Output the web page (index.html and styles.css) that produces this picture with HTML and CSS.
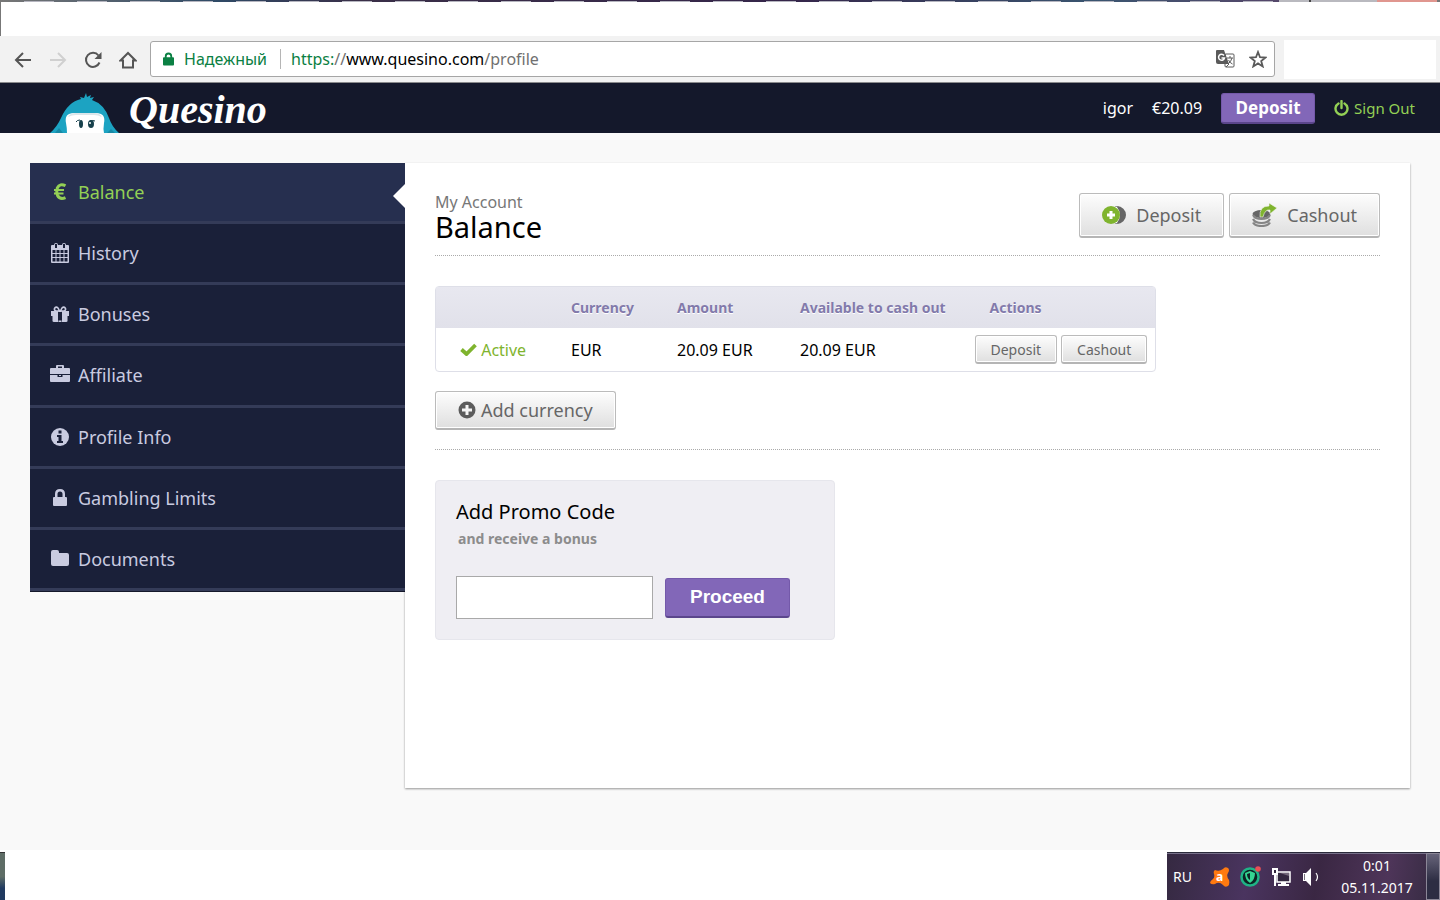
FILE: index.html
```
<!DOCTYPE html>
<html lang="en">

<head>
    <meta charset="utf-8">
    <title>Quesino - Balance</title>
    <link rel="stylesheet" href="styles.css">
</head>

<body>
    <div class="titlebar"></div>
    <div class="toolbar">
        <div class="nav-buttons">
            <button aria-label="Back"><svg width="18" height="18" viewBox="0 0 18 18"><path d="M17 9H2M9 2L2 9l7 7"/></svg></button>
            <button class="off" aria-label="Forward"><svg width="18" height="18" viewBox="0 0 18 18"><path d="M1 9h15M9 2l7 7-7 7"/></svg></button>
            <button aria-label="Reload"><svg width="18" height="18" viewBox="0 0 18 18"><path d="M15.5 11.500A7 7 0 1 1 14.500 4.500"/><path class="solid" d="M17.500 1v7h-7z"/></svg></button>
            <button aria-label="Home"><svg width="18" height="18" viewBox="0 0 18 18"><path d="M1.500 9.500L9 2l7.500 7.500H14v7H4v-7z"/></svg></button>
        </div>
        <div class="address">
            <svg width="11" height="14" viewBox="0 0 12 14"><path fill="#0b8043" d="M1 5h1V4a4 4 0 0 1 8 0v1h1q1 0 1 1v7q0 1-1 1H1q-1 0-1-1V6q0-1 1-1zm3 0h4V4a2 2 0 0 0-4 0z"/></svg>
            <span class="secure">Надежный</span>
            <div class="url"><span class="scheme">https:</span>//<span class="host">www.quesino.com</span>/profile</div>
            <button aria-label="Translate"><svg width="19" height="18" viewBox="0 0 19 18"><rect x="9" y="4" width="9" height="13" rx="1" fill="#fff" stroke="#5a5a5a"/><path fill="#5a5a5a" d="M1 0h7l5 14H2q-2 0-2-2V1q0-1 1-1z"/><path d="M8 5.500A3 3 0 1 0 8.500 8H5.500" fill="none" stroke="#fff" stroke-width="1.500"/><path d="M11 8h6M14 6v2M16 8q-1 4-4 6M12.500 10q1.500 3 4 4M10 17l3-3" fill="none" stroke="#5a5a5a"/></svg></button>
            <button aria-label="Bookmark"><svg width="18" height="18" viewBox="0 0 18 18"><path d="M9 2l2 5.200 5.500.3-4.300 3.500L13.700 16.400 9 13.400l-4.700 3L5.800 11 1.500 7.500 7 7.200z" fill="none" stroke="#5a5a5a" stroke-width="1.800"/></svg></button>
        </div>
        <div class="extensions"></div>
    </div>

    <header class="header">
        <a class="logo" href="#">
            <svg width="70" height="40" viewBox="0 0 70 40">
                <path fill="#1ca3c2" d="M0 40q7-6 11-15Q18 9 31 6l-1-2 4 1 2-5 1 4 4-2-1 3 4-1-2 3q12 4 17 18 3 9 10 15z"/>
                <path fill="#1789a5" d="M5 40l4-5 4 5zM57 40l4-4 4 4z"/>
                <path fill="#fff" d="M16 30q-2-10 8-10h22q10 0 8 10-1 6 0 10H17q0-5-1-10z"/>
                <path fill="#dbe6ea" d="M18 24q2-4 8-4h18q6 0 8 4-4-2-8-2H26q-4 0-8 2z"/>
                <ellipse cx="31" cy="31" rx="2" ry="4" fill="#17404c"/>
                <ellipse cx="41" cy="31" rx="3" ry="4" fill="#17404c"/>
                <path fill="none" stroke="#17404c" d="M26 29q1-2 4-2M45 28q-2-1-5 0"/>
                <circle cx="40" cy="30" r="1" fill="#fff"/>
            </svg>
            <span>Quesino</span>
        </a>
        <div class="user">
            <span>igor</span>
            <span class="sum">€20.09</span>
            <button class="purple top-deposit">Deposit</button>
            <a class="signout" href="#"><svg width="15" height="16" viewBox="0 0 15 16"><path d="M4.500 3.500a6 6 0 1 0 6 0M7.500 1v7" fill="none" stroke="#93d055" stroke-width="2.400" stroke-linecap="round"/></svg>Sign Out</a>
        </div>
    </header>

    <main class="page">
        <nav class="menu">
            <a class="active" href="#"><svg viewBox="0 0 20 20"><path d="M15.500 3.800Q10 .8 7.300 6q-1.200 4 .2 7.500Q10 18 15.500 15.600" fill="none" stroke="currentColor" stroke-width="3"/><path d="M4 8h10M4 11.500h9.500" stroke="currentColor" stroke-width="2"/></svg>Balance</a>
            <a href="#"><svg viewBox="0 0 20 20"><path fill="currentColor" fill-rule="evenodd" d="M2 2h2q0-2 2-2t2 2h4q0-2 2-2t2 2h2q1 0 1 1v16q0 1-1 1H2q-1 0-1-1V3q0-1 1-1zm3-1v4h2V1zm8 0v4h2V1zM2.500 7v3h3V7zm4 0v3h3V7zm4 0v3h3V7zm4 0v3h3V7zm-12 4v3h3v-3zm4 0v3h3v-3zm4 0v3h3v-3zm4 0v3h3v-3zm-12 4v3.500h3V15zm4 0v3.500h3V15zm4 0v3.500h3V15zm4 0v3.500h3V15z"/></svg>History</a>
            <a href="#"><svg viewBox="0 0 20 20"><path fill="currentColor" d="M1 7h7v5H1zM12 7h7v5h-7zM2.500 11H8v7H4q-1.500 0-1.500-1zM12 11h5.500v6q0 1-1.500 1h-4zM8.500 7h3v1h-3zM8.500 16.500h3V18h-3z"/><path d="M9.500 7H6Q4 6.500 4.500 4.500 6 2 8 4zM10.500 7H14q2-.500 1.500-2.500Q14 2 12 4z" fill="none" stroke="currentColor" stroke-width="1.600"/></svg>Bonuses</a>
            <a href="#"><svg viewBox="0 0 20 20"><path fill="currentColor" fill-rule="evenodd" d="M6 3V1q0-1 1-1h6q1 0 1 1v2h5q1 0 1 1v5H0V4q0-1 1-1zm2 0h4V1.500H8zM0 10h7.500v2h5v-2H20v6q0 1-1 1H1q-1 0-1-1zm9 0h2v1H9z"/></svg>Affiliate</a>
            <a href="#"><svg viewBox="0 0 20 20"><circle cx="10" cy="10" r="9" fill="currentColor"/><path fill="#1a2039" d="M8.500 3.500h3v3h-3zM7 8h4.500v6H13v2H7v-2h1.500v-4H7z"/></svg>Profile Info</a>
            <a href="#"><svg viewBox="0 0 20 20"><path fill="currentColor" fill-rule="evenodd" d="M4 9h1V6q0-5 5-5t5 5v3h1q1 0 1 1v7q0 1-1 1H4q-1 0-1-1v-7q0-1 1-1zm3.500 0h5V6q0-2.500-2.500-2.500T7.500 6z"/></svg>Gambling Limits</a>
            <a href="#"><svg viewBox="0 0 20 20"><path fill="currentColor" d="M1 3q0-2 2-2h4q2 0 2 2v1h8q2 0 2 2v9q0 2-2 2H3q-2 0-2-2z"/></svg>Documents</a>
        </nav>

        <section class="content">
            <div class="title">
                <div>
                    <p>My Account</p>
                    <h1>Balance</h1>
                </div>
                <div class="title-buttons">
                    <button class="grey big"><svg width="24" height="18" viewBox="0 0 24 18"><path fill="#666" d="M13 0a9 9 0 0 1 0 18 13 13 0 0 0 0-18z"/><path fill="#fff" d="M13 1q6 8 0 16h2q6-8 0-16z"/><path fill="#666" d="M15 0a9 9 0 0 1 0 18q7-9 0-18z"/><circle cx="9" cy="9" r="9" fill="#7fb42e"/><path fill="#fff" d="M7.500 5h3v2.500H13v3h-2.500V13h-3v-2.500H5v-3h2.500z"/></svg>Deposit</button>
                    <button class="grey big"><svg width="25" height="24" viewBox="0 0 25 24"><ellipse cx="9.500" cy="11" rx="9" ry="4" fill="#666"/><path d="M1 12q2 4 8.500 4t8.500-4M1 16q2 4 8.500 4t8.500-4M1 19.500q2 3.500 8.500 3.500t8.500-3.500" fill="none" stroke="#858585" stroke-width="2.200"/><path fill="#7fb42e" stroke="#f4f4f4" stroke-width=".6" d="M8 14Q7 3 17 3V0l8 5-7 6V7q-5-1-7 7z"/></svg>Cashout</button>
                </div>
            </div>

            <table class="balances">
                <thead>
                    <tr>
                        <th class="col-status"></th>
                        <th class="col-currency">Currency</th>
                        <th class="col-amount">Amount</th>
                        <th>Available to cash out</th>
                        <th>Actions</th>
                    </tr>
                </thead>
                <tbody>
                    <tr>
                        <td class="green"><svg width="17" height="13" viewBox="0 0 17 13"><path d="M1.500 6.500l5 4.500 9-9" fill="none" stroke="#7fb42e" stroke-width="3.800"/></svg> Active</td>
                        <td>EUR</td>
                        <td>20.09 EUR</td>
                        <td>20.09 EUR</td>
                        <td class="actions"><button class="grey small">Deposit</button><button class="grey small">Cashout</button></td>
                    </tr>
                </tbody>
            </table>

            <div class="add">
                <button class="grey"><svg width="18" height="18" viewBox="0 0 18 18"><circle cx="9" cy="9" r="8.500" fill="#5c5c5c"/><path fill="#f5f5f5" d="M7.500 4h3v3.500H14v3h-3.500V14h-3v-3.500H4v-3h3.500z"/></svg>Add currency</button>
            </div>

            <form class="promo">
                <h2><label for="code">Add Promo Code</label></h2>
                <p>and receive a bonus</p>
                <div class="promo-row">
                    <input type="text" id="code">
                    <button type="button" class="purple proceed">Proceed</button>
                </div>
            </form>
        </section>
    </main>

    <footer class="taskbar">
        <div class="start"></div>
        <div class="tray">
            <span class="lang">RU</span>
            <svg width="20" height="20" viewBox="0 0 20 20"><path fill="#ff7a10" d="M5 3q4 2 8-1 2-3 5-1 2 2 0 5-2 3 1 7 1 4-1 6-3 2-5-1-4-4-8-1-3 1-5-1 0-2 3-4 2-2 1-5-1-3 1-4z"/><text x="6" y="14" class="avast">a</text></svg>
            <svg width="22" height="22" viewBox="0 0 22 22"><circle cx="10" cy="11" r="8.500" fill="#0c2424" stroke="#1fb386" stroke-width="2.500"/><path fill="#35d492" d="M10 5l5 2q0 7-5 10-5-3-5-10z"/><path fill="#0c2424" d="M10 7l-3 1q0 4 3 6z"/><circle cx="18" cy="3" r="2.800" fill="#e85055"/></svg>
            <svg width="20" height="20" viewBox="0 0 20 20"><path fill="#33283f" stroke="#fff" stroke-width="1.500" d="M5 5h13v10H5z"/><path fill="#fff" d="M0 1h6v7H4v11H2V8H0zM9 15h5v2h3v2H6v-2h3z"/><path fill="#33283f" d="M2 3h2v3H2z"/><path fill="#73687a" d="M8 6h9v3z"/></svg>
            <svg width="18" height="20" viewBox="0 0 18 20"><path fill="#fff" d="M1 6h3l5-5v18l-5-5H1z"/><path fill="#77707c" d="M2 7h1v6H2z"/><path d="M14 6q3 4 0 8" fill="none" stroke="#fff" stroke-width="1.200"/></svg>
            <div class="clock">0:01<br>05.11.2017</div>
            <div class="desktop"></div>
        </div>
    </footer>
</body>

</html>
```

FILE: styles.css
```
* {
    box-sizing: border-box;
}

body {
    margin: 0;
    min-height: 100vh;
    display: flex;
    flex-direction: column;
    font-family: "Noto Sans", "Open Sans", sans-serif;
    font-size: 16px;
    background: #fff;
    color: #000;
}

h1, h2, p {
    margin: 0;
    font-weight: 400;
}

button {
    font-family: inherit;
    margin: 0;
    padding: 0;
    border: none;
    background: none;
}

a {
    text-decoration: none;
}

svg {
    flex: none;
}

/* browser window */
.titlebar {
    height: 36px;
    border-left: 1px solid #777;
    /* lower edges of the tabs, then the window buttons */
    background:
        linear-gradient(90deg, transparent 1278px, #b9b9bf 1278px 1308px, #444 1308px 1310px, #b9b9bf 1310px 1376px, #e0968f 1376px 1436px, #777 1436px) 0 0 / 100% 2px no-repeat,
        repeating-linear-gradient(90deg, transparent 0 23px, #b5b5bf 23px 53px, transparent 53px 49px) 0 1px / 100% 1px no-repeat,
        linear-gradient(90deg, #777, #2f4a66 15%, #3a2f48 25%, #35264a 55%, #3a5570 76%, #54476a 88%) 0 0 / 100% 2px no-repeat,
        #fff;
}

.toolbar {
    display: flex;
    height: 47px;
    padding: 4px 4px 3px 14px;
    background: #f2f2f2;
    border-bottom: 1px solid #8a8a8c;
}

.nav-buttons {
    display: flex;
    align-items: center;
    gap: 17px;
    width: 136px;
}

.nav-buttons button {
    height: 18px;
}

.nav-buttons svg {
    display: block;
    fill: none;
    stroke: #555;
    stroke-width: 2;
}

.nav-buttons .solid {
    fill: #555;
    stroke: none;
}

.nav-buttons .off svg {
    stroke: #d0d0d0;
}

.address {
    flex: 1;
    display: flex;
    align-items: center;
    height: 36px;
    margin-top: 1px;
    padding: 0 7px 0 12px;
    background: #fff;
    border: 1px solid #a6a6a6;
    border-radius: 3px;
}

.address button {
    height: 18px;
    margin-left: 14px;
}

.address button svg {
    display: block;
}

.secure {
    margin-left: 10px;
    padding-right: 13px;
    line-height: 20px;
    border-right: 1px solid #b5b5b5;
    color: #0b8043;
}

.url {
    flex: 1;
    margin-left: 10px;
    color: #707070;
}

.scheme {
    color: #0b8043;
}

.host {
    color: #000;
}

.extensions {
    width: 152px;
    margin-left: 9px;
    background: #fff;
}

/* site header */
.header {
    display: flex;
    justify-content: space-between;
    height: 50px;
    padding: 0 25px 0 50px;
    background: #14182b;
    overflow: hidden;
}

.logo {
    display: flex;
    align-items: flex-end;
    gap: 9px;
    color: #fff;
    font: italic 700 40px/50px "Liberation Serif", serif;
}

.logo span {
    height: 48px;
}

.user {
    display: flex;
    align-items: center;
    color: #fff;
}

.sum {
    margin: 0 19px;
}

.purple {
    background: #8267b8;
    border: 1px solid #7459aa;
    border-bottom: 2px solid #5b468c;
    border-radius: 3px;
    color: #fff;
    font-weight: 700;
}

.top-deposit {
    width: 94px;
    height: 31px;
    font-size: 17px;
    line-height: 24px;
}

.signout {
    display: flex;
    align-items: center;
    gap: 5px;
    margin-left: 19px;
    font-size: 15px;
    color: #93d055;
}

/* page */
.page {
    flex: 1;
    display: flex;
    align-items: flex-start;
    padding: 30px 30px 62px;
    background: #f9f9f9;
}

.menu {
    flex: none;
    display: grid;
    grid-auto-rows: 1fr;
    width: 375px;
    min-height: 429px;
    border-bottom: 1px solid #14182b;
}

.menu a {
    position: relative;
    display: flex;
    align-items: center;
    gap: 8px;
    padding: 0 20px;
    background: #1a2039;
    border-bottom: 3px solid #343b58;
    color: #c9cbe0;
    font-size: 18px;
}

.menu svg {
    width: 20px;
    height: 20px;
}

.menu .active {
    background: #262f4f;
    color: #93d055;
}

/* arrow that points at the open section */
.menu .active::after {
    content: "";
    position: absolute;
    right: 0;
    top: 21px;
    border: 12px solid transparent;
    border-right-color: #fff;
    border-left: none;
}

.content {
    flex: 1;
    min-height: 625px;
    padding: 30px;
    background: #fff;
    box-shadow: 0 1px 2px rgba(0, 0, 0, .4);
}

.title {
    display: flex;
    justify-content: space-between;
    height: 63px;
    border-bottom: 1px dotted #aaa;
}

.title p {
    line-height: 18px;
    color: #777;
}

.title h1 {
    font-size: 29px;
    line-height: 32px;
}

.title-buttons {
    display: flex;
    gap: 5px;
}

.grey {
    display: inline-flex;
    align-items: center;
    height: 39px;
    padding: 0 22px;
    border: 1px solid #bbb;
    border-bottom: 2px solid #b5b5b5;
    border-radius: 3px;
    background: linear-gradient(#fdfdfd, #dfdfdf);
    box-shadow: inset 0 0 0 1px #fff;
    font-size: 18px;
    color: #666;
    gap: 5px;
}

.big {
    height: 45px;
    gap: 10px;
}

.small {
    height: 29px;
    padding: 0 15px;
    font-size: 14px;
}

.balances {
    width: 721px;
    margin-top: 30px;
    table-layout: fixed;
    border: 1px solid #dedfe8;
    border-radius: 4px;
    border-spacing: 0;
}

.balances th, .balances td {
    padding: 0 0 0 24px;
    text-align: left;
    white-space: nowrap;
}

.balances th {
    height: 41px;
    background: linear-gradient(#e8e8f0, #e1e1ea);
    font-size: 14px;
    color: #827aab;
    text-shadow: 0 1px 0 #fff;
}

.balances td {
    height: 43px;
}

.col-status {
    width: 111px;
}

.col-currency {
    width: 106px;
}

.col-amount {
    width: 123px;
}

.balances .green {
    color: #7fb42e;
}

.balances .actions {
    padding-left: 9px;
}

.actions .small + .small {
    margin-left: 4px;
}

.add {
    padding: 19px 0;
    border-bottom: 1px dotted #aaa;
}

.add .grey {
    display: flex;
}

.promo {
    width: 400px;
    margin-top: 30px;
    padding: 18px 20px 20px;
    background: #efeef3;
    border: 1px solid #e6e6ec;
    border-radius: 4px;
}

.promo h2 {
    font-size: 20px;
    line-height: 26px;
}

.promo p {
    padding-left: 2px;
    font-size: 14px;
    font-weight: 700;
    line-height: 28px;
    color: #8c8c8c;
}

.promo-row {
    display: flex;
    align-items: center;
    gap: 12px;
    margin-top: 23px;
}

.promo input {
    width: 197px;
    height: 43px;
    padding: 0 10px;
    border: 1px solid #a9a9a9;
    background: #fff;
    font-size: 18px;
}

.proceed {
    width: 125px;
    height: 40px;
    font-family: "Liberation Sans", sans-serif;
    font-size: 19px;
}

/* desktop taskbar */
.taskbar {
    display: flex;
    justify-content: space-between;
    height: 50px;
    padding-top: 2px;
}

.start {
    width: 5px;
    border-top: 1px solid #333;
    background: linear-gradient(#5e6d66 50%, #203a60 75%);
}

.tray {
    display: flex;
    align-items: center;
    gap: 10px;
    width: 273px;
    padding-left: 6px;
    background: linear-gradient(100deg, #352941, #4a345f 30%, #3a2743 55%, #4e3559 80%, #332a3f);
    border-top: 1px solid #2b2b3b;
    box-shadow: inset 0 1px 0 #77708a;
    color: #fff;
    font-size: 14px;
}

.lang {
    width: 27px;
}

.avast {
    font: 700 12px "Noto Sans", sans-serif;
    fill: #fff;
}

.clock {
    flex: 1;
    padding-left: 8px;
    line-height: 22px;
    text-align: center;
}

.desktop {
    align-self: stretch;
    width: 14px;
    border: 1px solid #8b8797;
    background: linear-gradient(#67647a, #2d2d43 60%);
}
```
